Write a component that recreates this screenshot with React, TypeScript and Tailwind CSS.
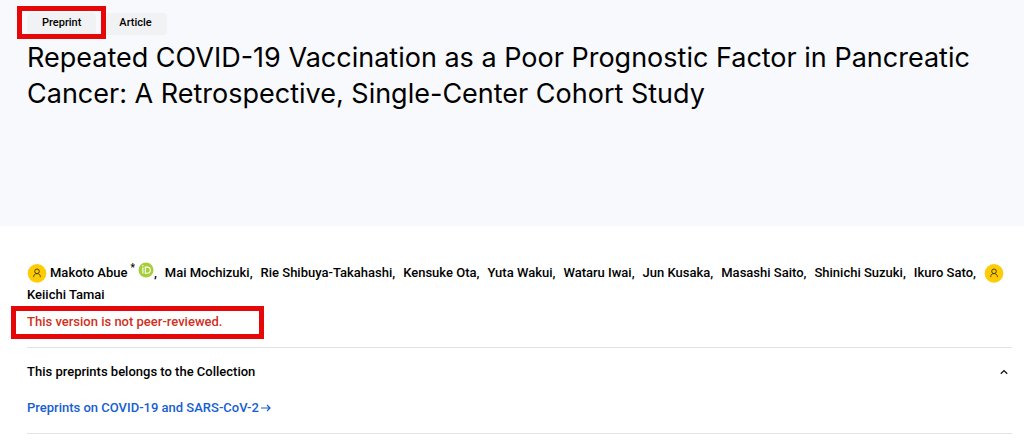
import type { ReactNode } from "react";

const middleAuthors = [
  "Mai Mochizuki",
  "Rie Shibuya-Takahashi",
  "Kensuke Ota",
  "Yuta Wakui",
  "Wataru Iwai",
  "Jun Kusaka",
  "Masashi Saito",
  "Shinichi Suzuki",
  "Ikuro Sato",
];

function UserBadge() {
  return (
    <svg viewBox="0 0 20 20" className="h-5 w-5 shrink-0" aria-hidden="true">
      <circle cx="10" cy="10.4" r="9.3" fill="#ffcb05" />
      <g fill="none" stroke="#4a4214" strokeWidth="1">
        <circle cx="10" cy="8.3" r="2.3" />
        <path d="M6.7 14.2V13.5C6.7 11.8 8 10.6 10 10.6S13.3 11.8 13.3 13.5V14.2" />
      </g>
    </svg>
  );
}

function OrcidIcon() {
  return (
    <svg viewBox="0 0 16 16" className="h-4 w-4" aria-label="ORCID" role="img">
      <circle cx="8" cy="8" r="7.5" fill="#a6ce39" />
      <circle cx="4.9" cy="3.8" r="0.7" fill="#fff" />
      <path d="M4.9 5.4V11.6" stroke="#fff" strokeWidth="1.1" />
      <path d="M7.3 5.1H9.1C11.2 5.1 12.3 6.5 12.3 8.2S11.2 11.2 9.1 11.2H7.3Z" fill="none" stroke="#fff" strokeWidth="1.1" />
    </svg>
  );
}

function Chip({ children }: { children: ReactNode }) {
  return (
    <span className="block rounded-sm bg-[#f0f2f3] px-[15px] pb-0.5 text-[11px] leading-5 font-medium">{children}</span>
  );
}

export default function App() {
  return (
    <main className="min-h-screen bg-white font-['Roboto','Liberation_Sans',sans-serif] text-black">
      <header className="bg-[#f8f9fd] pt-[13px] pr-3 pb-[114px] pl-[27px]">
        <div className="flex gap-2">
          <div className="relative">
            <Chip>Preprint</Chip>
            <div className="absolute -inset-x-2.5 -top-[7px] -bottom-1 border-[5px] border-[#e60808]" />
          </div>
          <Chip>Article</Chip>
        </div>
        <h1 className="mt-[5px] font-['Inter',sans-serif] text-[27px] leading-9 font-normal">
          Repeated COVID-19 Vaccination as a Poor Prognostic Factor in Pancreatic Cancer: A Retrospective, Single-Center Cohort Study
        </h1>
      </header>

      <div className="pt-9 pr-3 pl-[27px] text-[13px] font-medium">
        <ul className="flex flex-wrap items-center gap-x-2 leading-[22px]">
          <li className="flex items-center gap-[3px]">
            <UserBadge />
            <span>Makoto Abue</span>
            <sup className="text-[10px] leading-none">*</sup>
            <span className="flex items-center">
              <span className="pb-1.5"><OrcidIcon /></span>,
            </span>
          </li>
          {middleAuthors.map((name) => (
            <li key={name}>{name},</li>
          ))}
          <li><UserBadge /></li>
          <li>Keiichi Tamai</li>
        </ul>

        <div className="relative mt-1 w-[227px] leading-6 text-[#d0301c]">
          <p>This version is not peer-reviewed.</p>
          <div className="absolute -top-1 -right-2.5 -bottom-[5px] -left-4 border-[5px] border-[#e60808]" />
        </div>

        <section className="mt-[13px] border-y border-[#e2e3e4] pb-[13px]">
          <button type="button" className="flex w-full items-center justify-between pt-3 pr-1 text-left leading-6">
            This preprints belongs to the Collection
            <svg viewBox="0 0 8 6" className="h-1.5 w-2" aria-hidden="true">
              <path d="M0.8 4.8L4 1.6L7.2 4.8" fill="none" stroke="#111" strokeWidth="1.3" />
            </svg>
          </button>
          <a href="#collection" className="mt-3 flex w-fit items-center gap-0.5 leading-6 text-[#1660d0]">
            Preprints on COVID-19 and SARS-CoV-2
            <svg viewBox="0 0 10 8" className="h-2 w-2.5" aria-hidden="true">
              <path d="M0 4H9M6 1L9 4L6 7" fill="none" stroke="currentColor" strokeWidth="1.2" />
            </svg>
          </a>
        </section>
      </div>
    </main>
  );
}
